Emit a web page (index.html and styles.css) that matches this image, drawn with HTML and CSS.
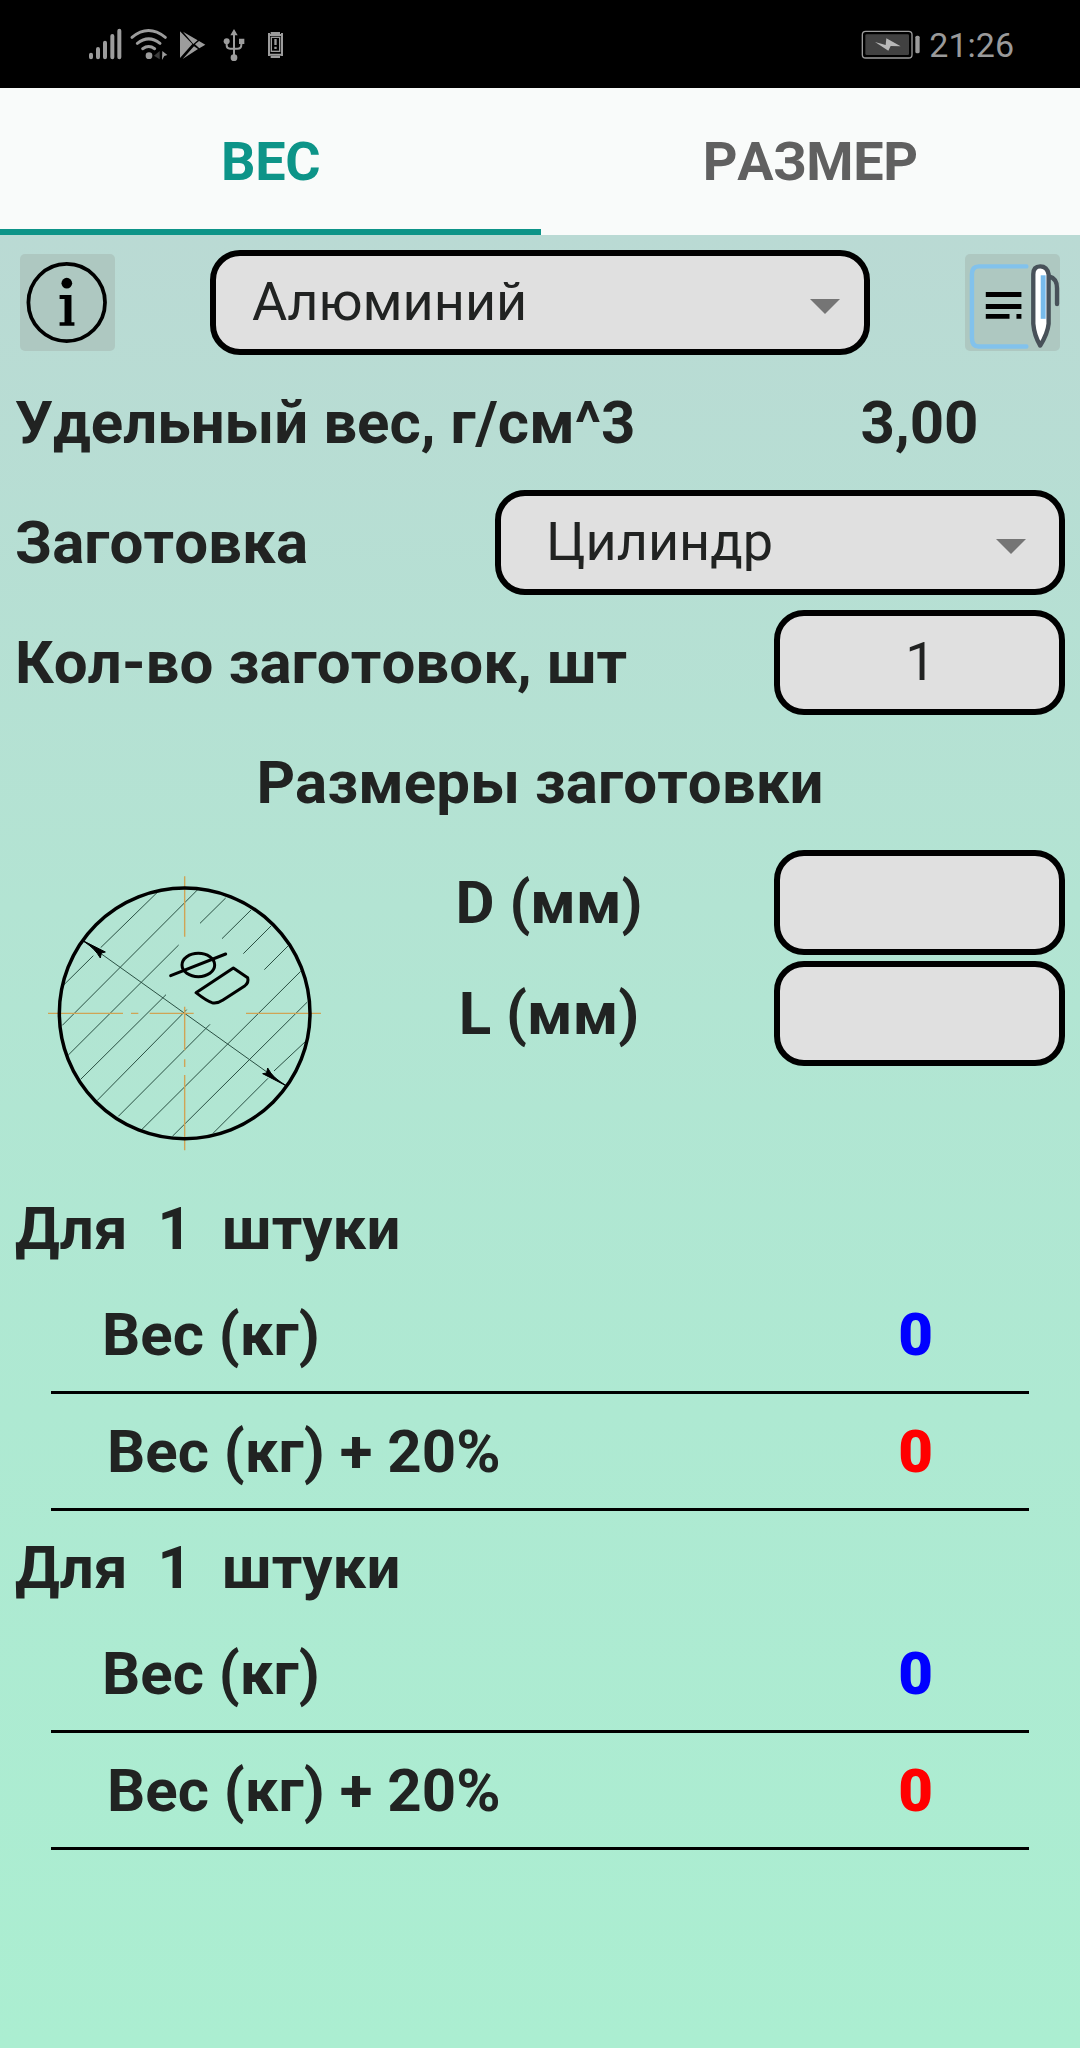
FILE: index.html
```html
<!DOCTYPE html>
<html lang="ru">
<head>
<meta charset="utf-8">
<title>Вес заготовки</title>
<link rel="stylesheet" href="styles.css">
</head>
<body>
<div class="screen">
  <header class="status">
    <svg class="status-icons" viewBox="0 0 720 210" fill="#9c9c9c" stroke="none">
      <g stroke="#9c9c9c" stroke-width="12" stroke-linecap="round" fill="none">
        <path d="M63 134v8M84 117v25M105 98v44M127 78v64M148 62v80"/>
        <path stroke-width="9" d="M186 82q49-41 100 0M202 100q34-27 68 0M218 116q18-13 36 0"/>
      </g>
      <circle cx="237" cy="137" r="10"/>
      <path d="M277 123l15 12-9 3-7 12z"/>
      <path fill="#3c3c3c" d="M252 137l17-14v25z"/>
      <path d="M330 64l37 38-37 42zM339 65l44 26-13 11zM372 109l12 8-46 30zM375 103l12-10 19 11-18 11z"/>
      <g fill="none" stroke="#9c9c9c" stroke-width="6">
        <path d="M492 72v70M470 96v10q0 10 10 10h22q12 0 12-12v-8"/>
      </g>
      <path d="M481 76l11-19 11 19zM507 86h16v16h-16z"/>
      <circle cx="470" cy="94" r="9"/><circle cx="492" cy="143" r="10"/>
      <g fill="none" stroke="#9c9c9c">
        <path stroke-width="6" d="M602 69h28M602 141h28"/>
        <path stroke-width="6" d="M597 69v69M636 69v69M597 75h39M597 134h39"/>
        <rect stroke-width="4" x="604" y="82" width="25" height="42"/>
      </g>
      <path d="M613 87h7v18h-7zM613 110h7v7h-7z"/>
    </svg>
    <div class="status-right">
      <svg class="battery" viewBox="0 0 180 90">
        <rect x="4" y="4" width="149" height="80" rx="10" fill="none" stroke="#9c9c9c" stroke-width="4"/>
        <rect x="13" y="13" width="131" height="62" rx="4" fill="#414141"/>
        <path d="M42 36l32 9 2-20 43 24-30-1-7 14z" fill="#b8b8b8"/>
        <rect x="163" y="17" width="13" height="53" rx="5" fill="#9c9c9c"/>
      </svg>
      <span class="time">21:26</span>
    </div>
  </header>

  <nav class="tabs">
    <div class="tab active">ВЕС</div>
    <div class="tab">РАЗМЕР</div>
  </nav>

  <main class="content">
    <div class="row toolbar">
      <div class="icon-button">
        <svg viewBox="0 0 96 97">
          <ellipse cx="47.200" cy="48.500" rx="38.700" ry="39" fill="none" stroke="#000" stroke-width="3.800"/>
          <circle cx="47.300" cy="29" r="5.400"/>
          <path d="M40 41h12v27.500h3V72H40v-3.500h5V45H40z"/>
        </svg>
      </div>
      <div class="field select material"><span>Алюминий</span><i class="arrow"></i></div>
      <div class="icon-button">
        <svg viewBox="0 0 96 97" fill="none" stroke-linecap="round">
          <path d="M62 12H14q-7 0-7 8v64q0 9 7 9h48" stroke="#82c2ec" stroke-width="4.500"/>
          <path d="M21 40.500h36M21 52.500h36M21 62.500h24M52 62.500h5" stroke="#000" stroke-width="5" stroke-linecap="butt"/>
          <path d="M69 75V20q0-8 7-8t7 8v55L76 92z" fill="#fff"/>
          <path d="M79 21v44" stroke="#78bbeb" stroke-width="5" stroke-linecap="butt"/>
          <path d="M69 70V20q0-8 7-8t8.500 8v50q-1 10-8.500 22q-6-10-7-22zM85 22q8 2 8 12v16" stroke="#485159" stroke-width="4.400" stroke-linejoin="round"/>
        </svg>
      </div>
    </div>

    <div class="row"><span class="label">Удельный вес, г/см^3</span><span class="label density">3,00</span></div>
    <div class="row"><span class="label loose">Заготовка</span><div class="field select shape"><span>Цилиндр</span><i class="arrow"></i></div></div>
    <div class="row"><span class="label loose">Кол-во заготовок, шт</span><div class="field input">1</div></div>
    <h2 class="row heading loose"><span class="label">Размеры заготовки</span></h2>

    <section class="dimensions">
      <svg class="drawing" viewBox="0 0 930 930" fill="none">
        <g stroke="#2a5043" stroke-width="3">
          <path d="M381 98L212 263M190 287L101 375M503 89L97 496M446 255L115 585M408 404L152 658M470 449L201 722M540 493L265 769M812 334L335 809M832 426L427 829M587 114L510 190M663 150L576 236M724 197L640 281M774 258L703 329M827 544L732 633M714 655L549 820"/>
          <path d="M157 241L768 677"/>
        </g>
        <path d="M54 460H279M303 460H325M359 460H491M648 460H873M464 49V230M464 440V571M464 598V621M464 645V871" stroke="#d0a455" stroke-width="4.200"/>
        <circle cx="464" cy="460" r="376" stroke="#000" stroke-width="10.500"/>
        <path d="M157 241l69 35-12 3-3 15q-17-30-54-53zM768 677l-70-36 12-2 3-15q16 31 55 53z" fill="#000" stroke="#000" stroke-width="3"/>
        <g stroke="#000" stroke-width="9" stroke-linecap="round" stroke-linejoin="round">
          <ellipse cx="505" cy="315" rx="49" ry="35"/>
          <path d="M422 347L587 282M610 324L498 398q32 25 48 30 17 3 33-8l66-43q12-9 8-24z"/>
        </g>
      </svg>
      <div class="dimension-fields">
        <div class="dimension"><span>D (мм)</span><div class="field input"></div></div>
        <div class="dimension"><span>L (мм)</span><div class="field input"></div></div>
      </div>
    </section>

    <section class="result">
      <h3 class="result-title loose">Для  1  штуки</h3>
      <div class="result-row"><span>Вес (кг)</span><b class="blue">0</b></div>
      <div class="result-row extra"><span>Вес (кг) + 20%</span><b class="red">0</b></div>
    </section>
    <section class="result">
      <h3 class="result-title loose">Для  1  штуки</h3>
      <div class="result-row"><span>Вес (кг)</span><b class="blue">0</b></div>
      <div class="result-row extra"><span>Вес (кг) + 20%</span><b class="red">0</b></div>
    </section>
  </main>
</div>
</body>
</html>
```

FILE: styles.css
```css
* { box-sizing: border-box; }
body { margin: 0; }
.screen {
  width: 1080px;
  height: 2048px;
  display: flex;
  flex-direction: column;
  overflow: hidden;
  font-family: Roboto, sans-serif;
  font-kerning: none;
  color: #212322;
}
svg { display: block; }

.status {
  height: 88px;
  flex: none;
  background: #000;
  display: flex;
  justify-content: space-between;
  padding: 10px 66px 8px 70px;
}
.status-icons { width: 240px; height: 70px; }
.status-right { display: flex; align-items: center; }
.battery { width: 60px; height: 30px; margin-right: 8px; }
.time { font-size: 34px; line-height: 40px; color: #9a9a9a; }

.tabs { height: 147px; flex: none; display: flex; background: #f9fbfa; }
.tab {
  flex: 1;
  border-bottom: 6px solid transparent;
  padding-top: 6px;
  display: flex;
  align-items: center;
  justify-content: center;
  font-size: 54px;
  font-weight: 700;
  letter-spacing: -0.3px;
  color: #606060;
}
.tab.active { color: #0d9488; border-color: #0d9488; padding-left: 1px; }

.content {
  flex: 1;
  padding-top: 8px;
  background: linear-gradient(#badad4, #b3e4d3 37%, #aee9d2 65%, #abeed1);
  font-size: 60px;
  font-weight: 700;
}
.row {
  height: 120px;
  display: flex;
  align-items: center;
  justify-content: space-between;
  padding: 0 15px 1px;
}
.label { margin-bottom: 1px; }
.loose { letter-spacing: 0.07px; }
.heading { margin: 0; font-size: 60px; justify-content: center; }
.toolbar { padding: 0 20px 1px; }
.icon-button { width: 95px; height: 97px; background: #aec8c1; border-radius: 5px; }
.icon-button svg { width: 95px; height: 97px; }
.density { width: 291px; text-align: center; }

.field {
  height: 105px;
  flex: none;
  border: 6px solid #000;
  border-radius: 30px;
  background: #e0e0e0;
  font-size: 54px;
  font-weight: 400;
  display: flex;
  align-items: center;
}
.select { justify-content: space-between; padding: 0 24px 2px 36px; }
.select .arrow { margin-top: 9px; }
.material { width: 660px; }
.shape { width: 570px; padding: 0 33px 2px 45px; }
.input { width: 291px; justify-content: center; padding: 0 0 2px 2px; }
.arrow {
  border: 15px solid transparent;
  border-top-color: #757575;
  border-bottom: 0;
}

.dimensions { display: flex; height: 329px; }
.drawing { width: 310px; height: 310px; margin: 17px 0 0 30px; }
.dimension-fields { flex: 1; padding: 7px 15px 0 0; display: flex; flex-direction: column; gap: 6px; }
.dimension { display: flex; align-items: center; height: 105px; }
.dimension span { flex: 1; text-align: center; padding-right: 16px; margin-bottom: 1px; }

.result { padding: 10px 51px 0; }
.result-title { margin: 0 0 0 -36px; height: 95px; line-height: 94px; font-size: 60px; white-space: pre; }
.result-row {
  height: 117px;
  border-bottom: 3px solid #000;
  display: flex;
  align-items: center;
  justify-content: space-between;
  padding: 0 96px 0 51px;
}
.result-row.extra { padding-left: 56px; }
.blue { color: #00f; }
.red { color: #f00; }
```
